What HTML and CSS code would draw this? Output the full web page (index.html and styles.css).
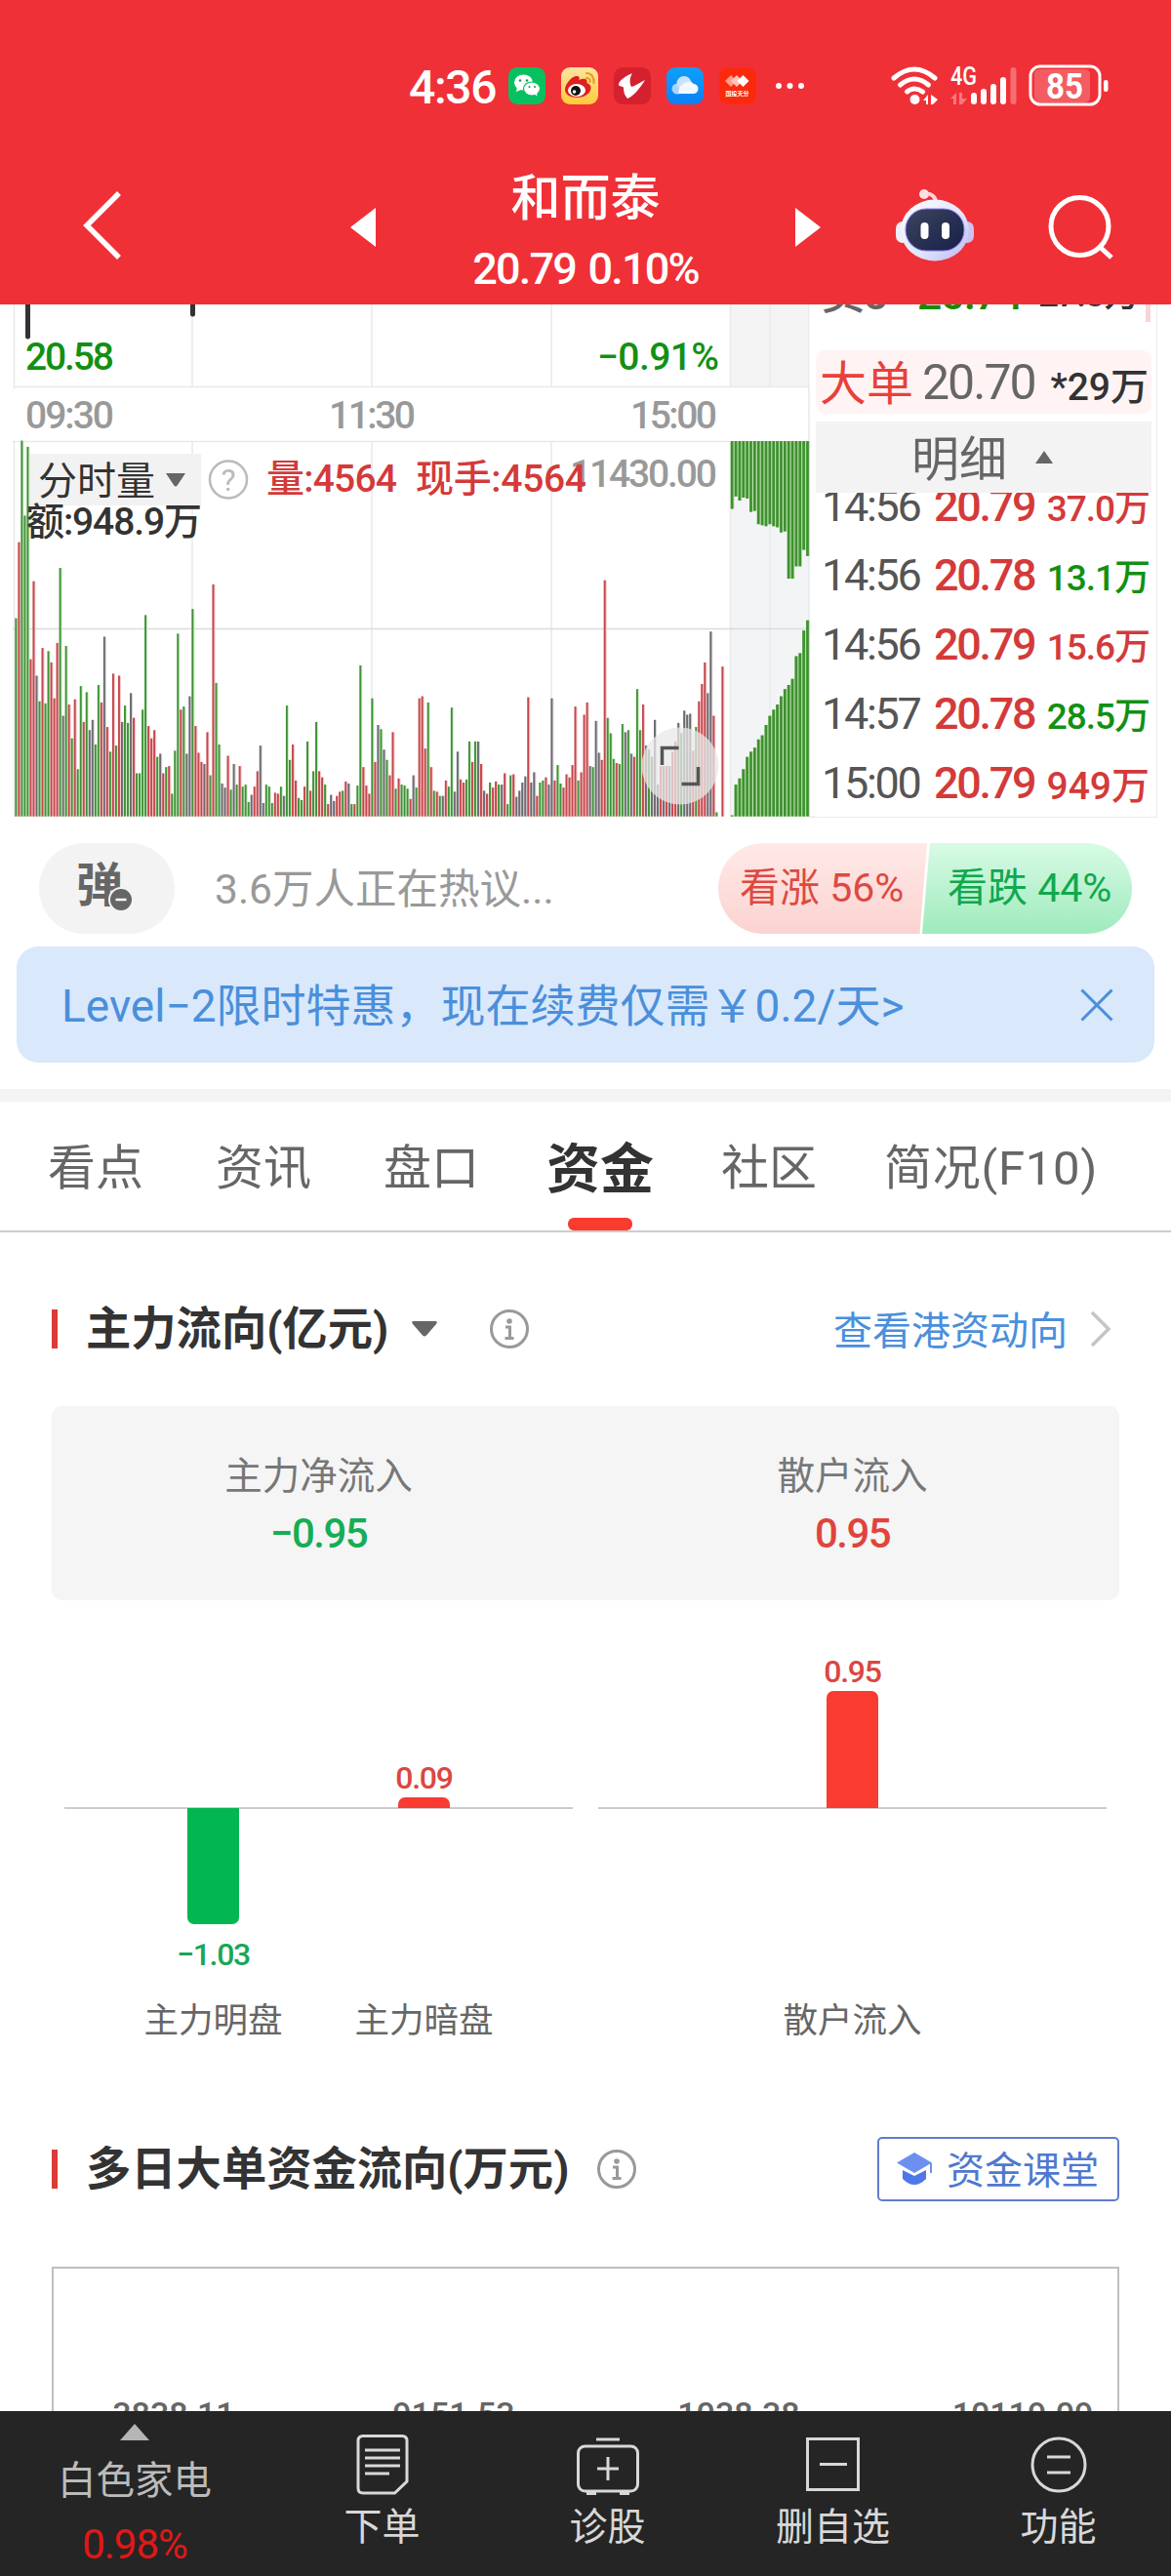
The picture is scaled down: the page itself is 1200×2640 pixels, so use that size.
FILE: index.html
```html
<!DOCTYPE html>
<html lang="zh-CN">
<head>
    <meta charset="UTF-8">
    <meta name="viewport" content="width=device-width, initial-scale=1.0">
    <title>和而泰 20.79 0.10%</title>
    <link rel="stylesheet" href="styles.css">
</head>
<body>
    <header class="header">
        <div class="status">
            <span class="clock">4:36</span>
            <div class="apps">
                <svg class="app" viewBox="0 0 38 38">
                    <rect width="38" height="38" rx="9" fill="#07c160"/>
                    <ellipse cx="15.500" cy="15.500" rx="9.500" ry="8" fill="#fff"/>
                    <path d="M9 20l-1 5 5-2z" fill="#fff"/>
                    <ellipse cx="24" cy="22" rx="8.500" ry="7" fill="#fff" stroke="#07c160" stroke-width="1.200"/>
                    <path d="M26 27l3.500 2.500-.5-4z" fill="#fff"/>
                    <g fill="#07a050"><circle cx="12" cy="13.500" r="1.300"/><circle cx="19" cy="13.500" r="1.300"/><circle cx="21.500" cy="20" r="1"/><circle cx="27" cy="20" r="1"/></g>
                </svg>
                <svg class="app" viewBox="0 0 38 38">
                    <defs><linearGradient id="wb" x1="0" y1="0" x2="0" y2="1"><stop offset="0" stop-color="#ffe5a3"/><stop offset="1" stop-color="#ffc93a"/></linearGradient></defs>
                    <rect width="38" height="38" rx="9" fill="url(#wb)"/>
                    <path d="M4 23C4 17 11 9 16 9c3 0 3 2 2.500 4 4-2 9-2 8 3 3 1 4 3 4 5 0 6-7 10-14 10S4 28 4 23z" fill="#df2020"/>
                    <ellipse cx="16" cy="23.500" rx="9" ry="6.500" fill="#fff"/>
                    <circle cx="15" cy="24" r="5" fill="#111"/>
                    <circle cx="13.500" cy="25" r="1.800" fill="#fff"/>
                    <path d="M26 6c5 0 8 4 7.500 10M26 11c2.500 0 4 1.500 3.500 4" fill="none" stroke="#e8a020" stroke-width="2.200" stroke-linecap="round"/>
                </svg>
                <svg class="app" viewBox="0 0 38 38">
                    <rect width="38" height="38" rx="9" fill="#d4212f"/>
                    <path d="M19 6C8 11 5 15 5 18c0 2 5 1 5 3 0 4 1 8 4 11 4-1 12-9 18-19-6 3-10 6-14 7-2-4-2-9 1-14z" fill="#fff"/>
                </svg>
                <svg class="app" viewBox="0 0 38 38">
                    <defs><linearGradient id="cl" x1="0" y1="0" x2="0" y2="1"><stop offset="0" stop-color="#0fa0f8"/><stop offset="1" stop-color="#0a80f5"/></linearGradient></defs>
                    <rect width="38" height="38" rx="9" fill="url(#cl)"/>
                    <circle cx="11" cy="22" r="5.500" fill="#a8d3fd"/>
                    <circle cx="18" cy="16.500" r="7.500" fill="#c9e3fe"/>
                    <path d="M12 27a12 12 0 0 1 9-12 7 7 0 0 1 7 2 5 5 0 0 1-1 10z" fill="#f2f8ff"/>
                </svg>
                <svg class="app" viewBox="0 0 38 38">
                    <rect width="38" height="38" rx="9" fill="#fb2a0c"/>
                    <path d="M12 8l6 6-6 6-6-6z" fill="#ff9c8c"/>
                    <path d="M18 8l6 6-6 6-6-6z" fill="#ffc4ba"/>
                    <path d="M24.500 8l6 6-6 6-6-6z" fill="#fff"/>
                    <text x="18.500" y="28.500" font-size="6" text-anchor="middle" fill="#fff" class="tiny">国投天分</text>
                </svg>
            </div>
            <svg class="dots" viewBox="0 0 30 8"><g fill="#fff"><circle cx="4" cy="4" r="3"/><circle cx="15.500" cy="4" r="3"/><circle cx="27" cy="4" r="3"/></g></svg>
            <svg class="signals" viewBox="910 64 228 48">
                <g fill="none" stroke="#fff" stroke-width="5" stroke-linecap="round">
                    <path d="M915 80Q936 62 957 80"/>
                    <path d="M921.500 87Q936 75 950.500 87"/>
                    <path d="M928.500 94Q936 88 944.500 94"/>
                </g>
                <circle cx="936.500" cy="102" r="5" fill="#fff"/>
                <path d="M945 103l5-6v10h-2v-4zM953 97l7 5-5 5h-2z" fill="#fff"/>
                <path d="M973 101l6-6v12h-3v-6zM982 95v12h3l5-6h-5v-6z" fill="#fff" opacity=".35"/>
                <text x="973" y="87" font-size="25" font-weight="500" textLength="27" lengthAdjust="spacingAndGlyphs" fill="#fff">4G</text>
                <g stroke="#fff" stroke-width="6" stroke-linecap="round">
                    <path d="M997 98v6M1007 94v10M1017 89v15M1027 82v22"/>
                    <path d="M1037.500 72v32" opacity=".3"/>
                </g>
                <rect x="1059" y="71" width="57" height="34" rx="5" fill="#fff" opacity=".22"/>
                <rect x="1055" y="68" width="71" height="39" rx="10" fill="none" stroke="#fff" stroke-width="3"/>
                <rect x="1130" y="82" width="4.500" height="12" rx="2" fill="#fff"/>
                <text x="1071" y="101" font-size="36" font-weight="700" textLength="38" lengthAdjust="spacingAndGlyphs" fill="#fff">85</text>
            </svg>
        </div>
        <nav class="nav">
            <svg class="back" viewBox="0 0 40 70"><path d="M37 2L4 35l33 33" fill="none" stroke="#fff" stroke-width="5.500"/></svg>
            <svg class="prev" viewBox="0 0 26 40"><path d="M26 0v40L0 20z" fill="#fff"/></svg>
            <div class="stock">
                <h1>和而泰</h1>
                <p>20.79 0.10%</p>
            </div>
            <svg class="next" viewBox="0 0 26 40"><path d="M0 0v40l26-20z" fill="#fff"/></svg>
            <svg class="robot" viewBox="0 0 80 76">
                <defs>
                    <linearGradient id="rb" x1="0" y1="0" x2="1" y2="1"><stop offset="0" stop-color="#fff"/><stop offset=".6" stop-color="#dfe4fa"/><stop offset="1" stop-color="#b8b4f0"/></linearGradient>
                    <linearGradient id="fc" x1="0" y1="0" x2="1" y2="1"><stop offset="0" stop-color="#3d4560"/><stop offset="1" stop-color="#161f48"/></linearGradient>
                </defs>
                <path d="M30 6c6-1 11 2 11 9" fill="none" stroke="#fbd5dc" stroke-width="4"/>
                <circle cx="29" cy="6" r="5" fill="#fbe0e4"/>
                <rect x="0" y="34" width="14" height="22" rx="7" fill="#f2edf8"/>
                <rect x="66" y="34" width="14" height="22" rx="7" fill="#cbc2f2"/>
                <ellipse cx="40" cy="43" rx="35" ry="31.500" fill="url(#rb)"/>
                <rect x="10" y="21" width="60" height="43" rx="21" fill="url(#fc)" stroke="#8a7af0" stroke-width="1"/>
                <rect x="25.500" y="35" width="8" height="17" rx="4" fill="#fff"/>
                <rect x="47" y="35" width="8" height="17" rx="4" fill="#fff"/>
            </svg>
            <svg class="search" viewBox="0 0 68 68"><circle cx="32.500" cy="33" r="29.500" fill="none" stroke="#fff" stroke-width="5"/><path d="M53 54l12 11" stroke="#fff" stroke-width="5"/></svg>
        </nav>
    </header>

    <section class="market">
        <svg class="chart" viewBox="0 312 836 528">
            <rect x="748" y="312" width="81" height="84" fill="#f4f4f5"/>
            <rect x="748" y="453" width="81" height="383" fill="#f3f4f5"/>
            <g stroke="#e9e9eb" stroke-width="1.500">
                <path d="M14.500 312v87M197 312v84M381 312v84M565 312v84M748.500 312v84M789 312v84M828.500 312v84M14 396.500h815"/>
                <path d="M14.500 453v384M197 453v384M381 453v384M565 453v384M748.500 453v384M789 453v384M829 396v441M13 452.500h735"/>
                <path d="M13 644.500h815" stroke="#dadada"/>
                <path d="M829 837.200h7"/>
            </g>
            <path d="M28.500 312v33M197.500 312v10" stroke="#333" stroke-width="5" stroke-linecap="round"/>
            <rect x="30" y="465" width="176" height="53" fill="#f2f2f2"/>
            <g id="volume"></g>
            <g id="depth"></g>
            <g class="chart-num">
                <text x="26" y="379" textLength="91" fill="#129012">20.58</text>
                <text x="612" y="379" textLength="125" fill="#129012">−0.91%</text>
                <text x="26" y="439" textLength="91" fill="#999">09:30</text>
                <text x="337" y="439" textLength="89" fill="#999">11:30</text>
                <text x="646" y="439" textLength="89" fill="#999">15:00</text>
                <text x="584" y="499" textLength="151" fill="#999">11430.00</text>
                <text x="39" y="507" textLength="120" class="cn" fill="#333">分时量</text>
                <text x="27" y="548" textLength="180" fill="#333">额:948.9万</text>
                <text x="273" y="504" textLength="134" fill="#d33a3a">量:4564</text>
                <text x="426" y="504" textLength="175" fill="#d33a3a">现手:4564</text>
            </g>
            <path d="M170 485h20l-8 12q-2 3-4 0z" fill="#666"/>
            <circle cx="234" cy="491.500" r="19" fill="none" stroke="#bbb" stroke-width="2.500"/>
            <text x="234" y="503" text-anchor="middle" font-size="32" fill="#bbb">?</text>
            <circle cx="697" cy="785" r="39.500" fill="#e8e8e8" fill-opacity=".75"/>
            <path d="M678.500 784v-17.500h17M698.500 803.500h17v-17.500" fill="none" stroke="#555" stroke-width="3.500"/>
        </svg>
        <div class="trades">
            <div class="sell-row"><span>卖5</span><b>20.74</b><i>27.3万</i></div>
            <div class="big-order">
                <span class="tag">大单</span>
                <span class="price">20.70</span>
                <span class="amount">*29万</span>
            </div>
            <div class="detail-head"><span>明细</span><svg viewBox="0 0 18 13"><path d="M9 0l9 13H0z" fill="#666"/></svg></div>
            <div class="trade-list">
                <div class="trade"><span>14:56</span><span class="up">20.79</span><span class="vol up">37.0万</span></div>
                <div class="trade"><span>14:56</span><span class="up">20.78</span><span class="vol down">13.1万</span></div>
                <div class="trade"><span>14:56</span><span class="up">20.79</span><span class="vol up">15.6万</span></div>
                <div class="trade"><span>14:57</span><span class="up">20.78</span><span class="vol down">28.5万</span></div>
                <div class="trade"><span>15:00</span><span class="up">20.79</span><span class="vol up large">949万</span></div>
            </div>
        </div>
    </section>

    <section class="discuss">
        <div class="danmu">弹<svg viewBox="0 0 26 26"><circle cx="13" cy="13" r="12" fill="#666" stroke="#f3f3f3" stroke-width="2"/><path d="M7.500 13h11" stroke="#fff" stroke-width="2.500"/></svg></div>
        <p>3.6万人正在热议...</p>
        <div class="vote">
            <span class="bull">看涨 56%</span>
            <span class="bear">看跌 44%</span>
        </div>
    </section>

    <div class="banner">
        <span>Level−2限时特惠，现在续费仅需￥0.2/天&gt;</span>
        <svg viewBox="0 0 34 34"><path d="M1.500 1.500l31 31M32.500 1.500l-31 31" stroke="#4a8fdc" stroke-width="3"/></svg>
    </div>

    <nav class="tabs">
        <a>看点</a>
        <a>资讯</a>
        <a>盘口</a>
        <a class="active">资金</a>
        <a>社区</a>
        <a>简况(F10)</a>
    </nav>

    <section class="flow">
        <div class="title-row">
            <h2>主力流向(亿元)</h2>
            <svg class="caret" viewBox="0 0 26 16"><path d="M2 0h22q3 0 1 3L15 14.500q-2 2-4 0L1 3Q-1 0 2 0z" fill="#666"/></svg>
            <svg class="info" viewBox="0 0 42 42"><use href="#i-info"/></svg>
            <a class="more"><span>查看港资动向</span><svg viewBox="0 0 22 38"><path d="M2 2l17 17L2 36" fill="none" stroke="#c4c4c4" stroke-width="3.500"/></svg></a>
        </div>
        <div class="summary">
            <div><span>主力净流入</span><b class="green">−0.95</b></div>
            <div><span>散户流入</span><b class="red">0.95</b></div>
        </div>
        <div class="bars">
            <div class="group">
                <div class="col">
                    <div class="pos"></div>
                    <div class="neg"><i style="height: 119px"></i><b>−1.03</b></div>
                    <span>主力明盘</span>
                </div>
                <div class="col">
                    <div class="pos"><b>0.09</b><i style="height: 11px"></i></div>
                    <div class="neg"></div>
                    <span>主力暗盘</span>
                </div>
            </div>
            <div class="group">
                <div class="col">
                    <div class="pos"><b>0.95</b><i style="height: 120px"></i></div>
                    <div class="neg"></div>
                    <span>散户流入</span>
                </div>
            </div>
        </div>
    </section>

    <section class="daily">
        <div class="title-row">
            <h2>多日大单资金流向(万元)</h2>
            <svg class="info" viewBox="0 0 42 42">
                <g id="i-info" fill="none" stroke="#999">
                    <circle cx="21" cy="21" r="18.500" stroke-width="3"/>
                    <circle cx="21" cy="13" r="2.800" fill="#999" stroke="none"/>
                    <path d="M17 19h4.500v11M16.500 30.500h9" stroke-width="3"/>
                </g>
            </svg>
            <a class="lesson">
                <svg viewBox="0 0 36 34"><path d="M6 18v9q12 12 24 0v-9l-12 6z" fill="#4e78ea"/><path d="M18 0L0 10.500 18 21l18-10.500z" fill="#6d90f0"/><path d="M35 11v10" stroke="#6d90f0" stroke-width="2"/></svg>
                <span>资金课堂</span>
            </a>
        </div>
        <div class="table">
            <span>3838.11</span>
            <span>9151.53</span>
            <span>1038.38</span>
            <span>10119.09</span>
        </div>
    </section>

    <footer class="bottom">
        <a class="sector">
            <svg viewBox="0 0 30 17"><path d="M15 0l15 17H0z" fill="#b5b5b5"/></svg>
            <span>白色家电</span>
            <b>0.98%</b>
        </a>
        <a>
            <svg viewBox="0 0 64 64"><path d="M12 2.500h40q5 0 5 5V49L44.500 61H12q-5 0-5-5V7.500q0-5 5-5zM14 17h36M14 25h36M14 33h36M14 41h25"/></svg>
            <span>下单</span>
        </a>
        <a>
            <svg viewBox="0 0 64 64"><rect x="1.500" y="13" width="61" height="46" rx="7"/><path d="M20 6h24M32 24v24M21 36h22M10 61.500h10M44 61.500h10"/></svg>
            <span>诊股</span>
        </a>
        <a>
            <svg viewBox="0 0 64 64"><rect x="5.500" y="5.500" width="52" height="52"/><path d="M18 31.500h28"/></svg>
            <span>删自选</span>
        </a>
        <a>
            <svg viewBox="0 0 64 64"><circle cx="32" cy="32" r="27"/><path d="M20 24h24M20 40h24"/></svg>
            <span>功能</span>
        </a>
    </footer>

    <script src="chart.js"></script>
</body>
</html>
```

FILE: styles.css
```css
* {
    box-sizing: border-box;
}
body {
    margin: 0;
    width: 1200px;
    height: 2640px;
    overflow: hidden;
    display: flex;
    flex-direction: column;
    background: #fff;
    color: #333;
    font-family: Roboto, "Noto Sans CJK SC", sans-serif;
}
h1, h2, p {
    margin: 0;
    font-weight: normal;
}
svg {
    display: block;
    flex: none;
}

/* header */
.header {
    height: 312px;
    flex: none;
    background: #f03037;
    color: #fff;
}
.status {
    height: 150px;
    padding: 26px 0 0 419px;
    display: flex;
    align-items: center;
}
.clock {
    width: 102px;
    padding-top: 3px;
    font-size: 48px;
    font-weight: 500;
    letter-spacing: -1.3px;
}
.apps {
    display: flex;
    gap: 16px;
}
.app {
    width: 38px;
    height: 38px;
}
.tiny {
    font-weight: 700;
}
.dots {
    width: 30px;
    height: 8px;
    margin-left: 19px;
}
.signals {
    width: 228px;
    height: 48px;
    margin-left: 87px;
}
.nav {
    height: 162px;
    padding-left: 85px;
    display: flex;
    align-items: center;
}
.back {
    width: 40px;
    height: 70px;
}
.prev, .next {
    width: 26px;
    height: 40px;
    margin-top: 3px;
}
.prev {
    margin-left: 234px;
}
.next {
    margin-right: 77px;
}
.stock {
    width: 430px;
    padding-top: 18px;
    text-align: center;
}
.stock h1 {
    font-size: 51px;
    font-weight: 500;
    line-height: 72px;
}
.stock p {
    font-size: 45px;
    font-weight: 500;
    line-height: 72px;
    letter-spacing: -1.8px;
    word-spacing: 3px;
}
.robot {
    width: 80px;
    height: 76px;
}
.search {
    width: 68px;
    height: 68px;
    margin: 3px 0 0 76px;
}

/* intraday chart + trade list */
.market {
    height: 528px;
    flex: none;
    display: flex;
}
.chart {
    width: 836px;
    height: 528px;
}
.chart-num {
    font-size: 39px;
    font-weight: 500;
}
.chart-num .cn {
    font-weight: 400;
    font-size: 40px;
}
.trades {
    width: 350px;
    height: 526px;
    border-right: 1px solid #ececec;
    border-bottom: 1px solid #ececec;
    font-size: 45px;
}
.sell-row {
    height: 47px;
    padding: 0 0 0 5px;
    overflow: hidden;
    display: flex;
    justify-content: space-between;
    line-height: 56px;
    color: #666;
}
.sell-row::after {
    content: "";
    width: 5px;
    height: 18px;
    margin-right: 6px;
    background: #f8d3d8;
}
.sell-row span, .sell-row b, .sell-row i {
    margin-top: -38px;
    font-style: normal;
    font-weight: 500;
    letter-spacing: -1.5px;
}
.sell-row b {
    margin-left: 14px;
    color: #128c00;
}
.sell-row i {
    margin-right: -10px;
    font-size: 37px;
    color: #333;
}
.big-order {
    width: 344px;
    height: 65px;
    padding: 0 3px 0 4px;
    display: flex;
    align-items: center;
    border-radius: 10px;
    background: #fff3f4;
}
.big-order .tag {
    padding-bottom: 6px;
    font-size: 48px;
    color: #e8413a;
}
.big-order .price {
    margin-left: 9px;
    font-size: 50px;
    color: #666;
    letter-spacing: -2px;
}
.big-order .amount {
    margin-left: auto;
    padding-top: 2px;
    font-size: 39px;
    font-weight: 500;
    letter-spacing: 0;
}
.detail-head {
    width: 344px;
    height: 73px;
    margin-top: 8px;
    padding-left: 98px;
    display: flex;
    align-items: center;
    gap: 29px;
    background: #f3f3f3;
    font-size: 49px;
    color: #666;
}
.detail-head span {
    padding-bottom: 4px;
}
.detail-head svg {
    width: 18px;
    height: 13px;
}
.trade-list {
    height: 332px;
    overflow: hidden;
}
.trade {
    height: 71px;
    padding-left: 6px;
    display: flex;
    align-items: center;
    font-weight: 500;
    letter-spacing: -2.300px;
    color: #555;
}
.trade:first-child {
    margin-top: -22px;
}
.trade span:first-child {
    width: 115px;
    font-weight: 400;
}
.trade .up {
    color: #d33a3a;
}
.trade .vol {
    flex: 1;
    margin-right: 7px;
    padding-bottom: 1px;
    text-align: right;
    font-size: 37px;
    letter-spacing: -1px;
}
.trade .large {
    font-size: 39px;
    letter-spacing: 0;
}
.trade .down {
    color: #129012;
}

/* discussion */
.discuss {
    height: 130px;
    flex: none;
    padding: 24px 40px 0;
    display: flex;
}
.danmu {
    position: relative;
    width: 139px;
    height: 93px;
    padding-left: 38px;
    border-radius: 47px;
    background: #f3f3f3;
    font-size: 48px;
    font-weight: 700;
    line-height: 88px;
    color: #666;
}
.danmu svg {
    position: absolute;
    left: 71px;
    top: 45px;
    width: 26px;
    height: 26px;
}
.discuss p {
    margin-left: 41px;
    font-size: 42.500px;
    line-height: 96px;
    color: #999;
}
.vote {
    margin-left: auto;
    width: 424px;
    height: 93px;
    display: flex;
    border-radius: 47px;
    overflow: hidden;
    font-size: 41px;
    line-height: 92px;
    white-space: nowrap;
}
.bull {
    width: 214px;
    padding-left: 22px;
    background: linear-gradient(#ffe9e8, #fbd3d0);
    clip-path: polygon(0 0, 100% 0, 96.500% 100%, 0 100%);
    color: #dc4a42;
}
.bear {
    width: 215px;
    margin-left: -5px;
    padding-left: 26px;
    background: linear-gradient(#d8fbe5, #9eeabd);
    clip-path: polygon(3.700% 0, 100% 0, 100% 100%, 0 100%);
    color: #12a84e;
}
.banner {
    height: 119px;
    flex: none;
    margin: 0 17px;
    padding: 0 42px 0 46px;
    display: flex;
    align-items: center;
    justify-content: space-between;
    border-radius: 22px;
    background: #d9e8fb;
    font-size: 46px;
    color: #4a8fdc;
}
.banner span {
    padding-bottom: 6px;
}
.banner svg {
    width: 34px;
    height: 34px;
}

/* tabs */
.tabs {
    height: 147px;
    flex: none;
    margin-top: 27px;
    padding: 5px 0 0 49px;
    border-top: 13px solid #f4f4f4;
    border-bottom: 2px solid #ccc;
    display: flex;
    font-size: 49px;
    line-height: 128px;
    color: #666;
}
.tabs a {
    height: 100%;
    margin-right: 74px;
    white-space: nowrap;
}
.tabs a:nth-child(3) {
    margin-right: 69px;
}
.tabs a:last-child {
    letter-spacing: .7px;
}
.tabs .active {
    position: relative;
    margin-right: 69px;
    font-size: 55px;
    font-weight: 700;
    color: #333;
}
.tabs .active::after {
    content: "";
    position: absolute;
    left: 22px;
    bottom: 0;
    width: 66px;
    height: 13px;
    border-radius: 6px;
    background: #f83c30;
}
.tabs a:nth-child(5) {
    margin-right: 69px;
}

/* section titles */
.title-row {
    height: 66px;
    display: flex;
    align-items: center;
}
.title-row h2 {
    height: 66px;
    display: flex;
    align-items: center;
    font-size: 46.300px;
    font-weight: 700;
    line-height: 63px;
}
.title-row h2::before {
    content: "";
    width: 6px;
    height: 40px;
    margin-right: 29px;
    background: #dc3a36;
}
.caret {
    width: 26px;
    height: 16px;
    margin-left: 24px;
}
.info {
    width: 42px;
    height: 42px;
}
.caret + .info {
    margin-left: 53px;
}
.more {
    margin-left: auto;
    margin-right: 8px;
    display: flex;
    align-items: center;
    gap: 23px;
    font-size: 40px;
    color: #4a8fdc;
}
.more span {
    padding-bottom: 3px;
}
.lesson span {
    padding-bottom: 5px;
}
.more svg {
    width: 22px;
    height: 38px;
}

/* capital flow */
.flow {
    height: 927px;
    flex: none;
    padding: 66px 53px 0;
}
.summary {
    height: 199px;
    margin-top: 46px;
    padding-top: 42px;
    display: flex;
    border-radius: 10px;
    background: #f5f5f5;
    text-align: center;
}
.summary div {
    width: 50%;
}
.summary span {
    display: block;
    font-size: 38.500px;
    line-height: 59px;
    color: #777;
}
.summary b {
    display: block;
    font-size: 42px;
    font-weight: 500;
    line-height: 59px;
    letter-spacing: -1.6px;
}
.green {
    color: #16ad55;
}
.red {
    color: #e0443c;
}
.bars {
    height: 448px;
    margin-top: 44px;
    padding: 0 13px;
    display: flex;
    gap: 26px;
}
.group {
    flex: 1;
    display: flex;
    justify-content: center;
    background: linear-gradient(#ccc, #ccc) 0 168px / 100% 2px no-repeat;
}
.col {
    width: 216px;
    text-align: center;
}
.col i {
    display: block;
    width: 53px;
    margin: 0 auto;
}
.col b {
    font-size: 32px;
    font-weight: 500;
    line-height: 40px;
    letter-spacing: -1.3px;
}
.col span {
    display: block;
    font-size: 35.500px;
    line-height: 53px;
    color: #666;
}
.pos {
    height: 169px;
    display: flex;
    flex-direction: column;
    justify-content: flex-end;
    color: #dc4640;
}
.pos i {
    border-radius: 7px 7px 0 0;
    background: #f93b31;
}
.neg {
    height: 192px;
    color: #1aa656;
}
.neg i {
    border-radius: 0 0 7px 7px;
    background: #02b652;
}
.neg b {
    display: block;
    margin-top: 11px;
}

/* multi-day flow */
.daily {
    flex: 1;
    min-height: 0;
    overflow: hidden;
    padding: 0 53px;
}
.daily .info {
    margin-left: 28px;
}
.lesson {
    height: 66px;
    width: 248px;
    margin-left: auto;
    padding-left: 18px;
    display: flex;
    align-items: center;
    gap: 15px;
    border: 2px solid #5f7dcc;
    border-radius: 5px;
    font-size: 39px;
    color: #5078d0;
    white-space: nowrap;
}
.lesson svg {
    width: 36px;
    height: 34px;
}
.table {
    height: 300px;
    margin-top: 67px;
    padding: 129px 0 0;
    display: grid;
    grid-template-columns: 246px 328px 256px 1fr;
    border: 2px solid #bfbfbf;
    text-align: center;
    font-size: 34px;
    font-weight: 500;
    line-height: 40px;
    color: #666;
}
.table span:last-child {
    padding-left: 66px;
}

/* bottom bar */
.bottom {
    height: 169px;
    flex: none;
    display: grid;
    grid-template-columns: 276px repeat(4, 231px);
    background: #252525;
    color: #d8d8d8;
    font-size: 39px;
}
.bottom a {
    display: flex;
    flex-direction: column;
    align-items: center;
    padding-top: 23px;
}
.bottom a > svg {
    width: 64px;
    height: 64px;
    fill: none;
    stroke: #d8d8d8;
    stroke-width: 3;
}
.bottom span {
    line-height: 65px;
}
.bottom .sector {
    padding-top: 13px;
    color: #bbb;
}
.bottom .sector svg {
    width: 30px;
    height: 17px;
    stroke: none;
}
.bottom .sector span {
    margin-top: 9px;
    font-size: 39.500px;
}
.bottom .sector b {
    font-size: 42px;
    font-weight: 400;
    line-height: 65px;
    letter-spacing: -1px;
    color: #e01818;
}
```

FILE: chart.js
```js
// r = up, g = down, k = flat; the number is the volume
const volume = `
g193 r267 g366 g293 g360 r153 r229 k137 g112 r164 g110 g161 r150 r115 r169 g242 k98 g166 r109 g76
r114 g46 g127 r92 g121 k84 k94 g70 g128 r111 k175 r87 g63 r139 g69 r137 k92 g108 g91 k120
r96 g42 g42 g104 g196 r88 r76 r84 g58 k61 r42 g48 r49 g22 g64 g178 r104 g107 k61 k117
g202 r88 r62 r53 k51 r82 g40 r226 g130 g70 k32 k28 r59 g26 k51 g31 r49 g29 g31 g14
k21 r29 r44 k69 k13 g31 g29 g13 r23 r22 g29 k20 g108 g55 r70 r35 g18 g16 r29 g73
r25 g44 g92 r44 r38 g31 r12 k21 k15 r20 r24 g25 r34 k32 g12 r12 g30 g147 r48 r30
r22 g115 r53 k89 g85 k65 g55 r40 r82 g27 r37 g31 g30 g27 r17 k40 g28 r115 r117 r66
g111 r48 g25 r24 g20 k20 r35 g29 g106 k24 k63 r36 r33 g36 g73 r53 g73 k73 r51 k25
r22 g33 r28 r34 g31 k31 r42 g12 g40 r41 k19 k25 k33 k39 r116 k33 k43 r20 g33 g35
r38 k31 k115 r35 g50 g32 r28 r41 r38 r50 r107 g35 r43 r99 r111 k49 g48 k93 k62 r55
r230 g96 g81 g56 r52 g51 g90 k82 g84 k61 r58 g124 g84 r109 k69 g65 k58 k94 k31 r49
k49 r49 k49 r63 r73 k91 g81 k103 k99 k100 r64 g87 r112 r129 r150 k120 k180 r98 g4 k0 r146`
    .trim().split(/\s+/);

const colors = { r: '#c4474c', g: '#3f9138', k: '#6c6a70' };
const tints = { r: '#f7c9cb', g: '#cfecc6', k: '#d6d5d8' };
const base = 836.7;
const scale = 1.0523;

function rect(x, y, w, h, fill) {
    return `<rect x="${x.toFixed(2)}" y="${y.toFixed(1)}" width="${w}" height="${h.toFixed(1)}" fill="${fill}"/>`;
}

document.getElementById('volume').innerHTML = volume.map((bar, i) => {
    const c = bar[0];
    const h = Number(bar.slice(1)) * scale;
    const x = 15.4 + i * 3.0167;
    return h ? rect(x, base - h, 3, h, tints[c]) + rect(x, base - h, 1.9, h, colors[c]) : '';
}).join('');

const sell = [66, 54, 58, 55, 56, 69, 68, 81, 82, 83, 81, 83, 84, 89, 88, 134, 134, 122, 122, 106, 112];
const buy = [1, 31, 37, 46, 58, 63, 67, 75, 79, 89, 98, 104, 109, 117, 124, 128, 134, 156, 159, 181, 191];

function depthBar(i, y, h) {
    const x = 748.6 + i * 3.867;
    return rect(x, y, 3.8, h, '#b5dda5') + rect(x + .2, y, 2.7, h, '#3f9130');
}

document.getElementById('depth').innerHTML =
    sell.map((v, i) => depthBar(i, 452, v * scale)).join('') +
    buy.map((v, i) => depthBar(i, base - v * scale, v * scale)).join('');
```
